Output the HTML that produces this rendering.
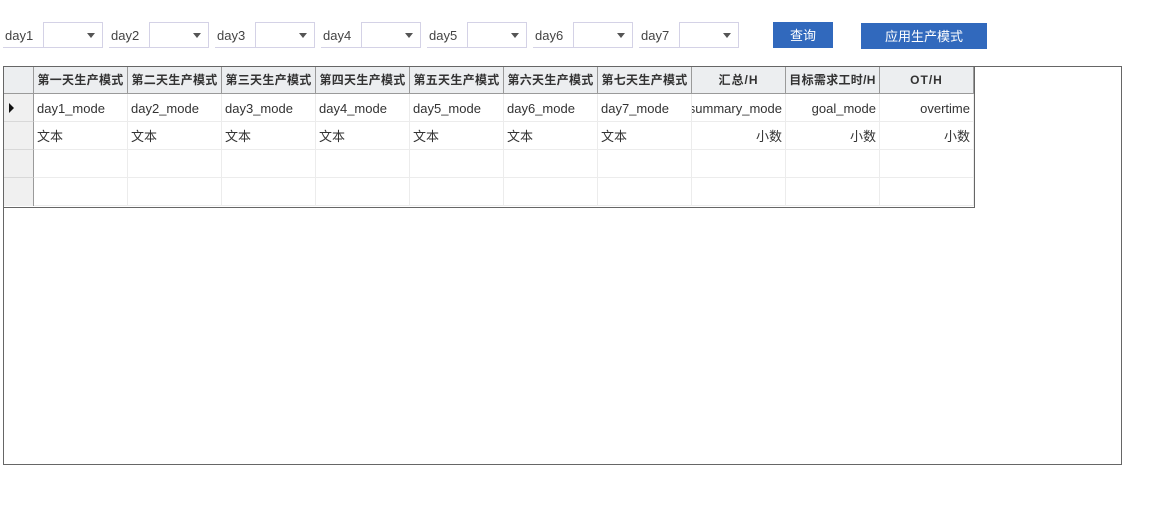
<!DOCTYPE html>
<html><head><meta charset="utf-8"><style>
*{margin:0;padding:0;box-sizing:border-box}
body{width:1171px;height:511px;background:#fff;position:relative;overflow:hidden;font-family:"Liberation Sans","Noto Sans CJK SC",sans-serif;font-size:13px;color:#333}
.a{position:absolute}
.lbl{height:26px;line-height:28px;border-bottom:1px solid #d4d2e6;padding-left:2px;color:#444}
.cb{width:60px;height:26px;border:1px solid #d4d2e6;background:#fff}
.cb:after{content:"";position:absolute;right:7px;top:10px;border-left:4px solid transparent;border-right:4px solid transparent;border-top:5px solid #555}
.btn{background:#3169bd;color:#fff;text-align:center;line-height:28px;height:26px}
.h{top:67px;height:27px;background:#eceef0;border-right:1px solid #9a9a9a;border-bottom:1px solid #9a9a9a;font-weight:bold;font-size:12px;line-height:27px;text-align:center;color:#333;overflow:hidden;white-space:nowrap;letter-spacing:0.3px}
.c{height:28px;border-right:1px solid #ececec;border-bottom:1px solid #ececec;line-height:29px;padding:0 3px;overflow:hidden;white-space:nowrap;width:94px}
.r{text-align:right}
.rh{left:4px;width:30px;height:28px;background:#f0f0f0;border-right:1px solid #9a9a9a;border-bottom:1px solid #d8d8d8}
</style></head><body>
<div class="a" style="left:3px;top:66px;width:1119px;height:399px;border:1px solid #666"></div>
<div class="a" style="left:3px;top:66px;width:972px;height:142px;border:1px solid #666;border-top:none;border-left:none"></div>

<div class="a lbl" style="left:3px;top:22px;width:40px">day1</div><div class="a cb" style="left:43px;top:22px"></div>
<div class="a lbl" style="left:109px;top:22px;width:40px">day2</div><div class="a cb" style="left:149px;top:22px"></div>
<div class="a lbl" style="left:215px;top:22px;width:40px">day3</div><div class="a cb" style="left:255px;top:22px"></div>
<div class="a lbl" style="left:321px;top:22px;width:40px">day4</div><div class="a cb" style="left:361px;top:22px"></div>
<div class="a lbl" style="left:427px;top:22px;width:40px">day5</div><div class="a cb" style="left:467px;top:22px"></div>
<div class="a lbl" style="left:533px;top:22px;width:40px">day6</div><div class="a cb" style="left:573px;top:22px"></div>
<div class="a lbl" style="left:639px;top:22px;width:40px">day7</div><div class="a cb" style="left:679px;top:22px"></div>
<div class="a btn" style="left:773px;top:22px;width:60px">查询</div>
<div class="a btn" style="left:861px;top:23px;width:126px">应用生产模式</div>

<div class="a h" style="left:4px;width:30px"></div>
<div class="a h" style="left:34px;width:94px">第一天生产模式</div>
<div class="a h" style="left:128px;width:94px">第二天生产模式</div>
<div class="a h" style="left:222px;width:94px">第三天生产模式</div>
<div class="a h" style="left:316px;width:94px">第四天生产模式</div>
<div class="a h" style="left:410px;width:94px">第五天生产模式</div>
<div class="a h" style="left:504px;width:94px">第六天生产模式</div>
<div class="a h" style="left:598px;width:94px">第七天生产模式</div>
<div class="a h" style="left:692px;width:94px;letter-spacing:1px">汇总/H</div>
<div class="a h" style="left:786px;width:94px">目标需求工时/H</div>
<div class="a h" style="left:880px;width:94px;letter-spacing:1px">OT/H</div>

<div class="a rh" style="top:94px"><div class="a" style="left:5px;top:9px;border-top:5px solid transparent;border-bottom:5px solid transparent;border-left:5px solid #111"></div></div>
<div class="a rh" style="top:122px"></div>
<div class="a rh" style="top:150px"></div>
<div class="a rh" style="top:178px;border-bottom:none"></div>

<div class="a c" style="left:34px;top:94px">day1_mode</div>
<div class="a c" style="left:128px;top:94px">day2_mode</div>
<div class="a c" style="left:222px;top:94px">day3_mode</div>
<div class="a c" style="left:316px;top:94px">day4_mode</div>
<div class="a c" style="left:410px;top:94px">day5_mode</div>
<div class="a c" style="left:504px;top:94px">day6_mode</div>
<div class="a c" style="left:598px;top:94px">day7_mode</div>
<div class="a c r" style="left:692px;top:94px;direction:rtl">summary_mode</div>
<div class="a c r" style="left:786px;top:94px">goal_mode</div>
<div class="a c r" style="left:880px;top:94px">overtime</div>

<div class="a c" style="left:34px;top:122px">文本</div>
<div class="a c" style="left:128px;top:122px">文本</div>
<div class="a c" style="left:222px;top:122px">文本</div>
<div class="a c" style="left:316px;top:122px">文本</div>
<div class="a c" style="left:410px;top:122px">文本</div>
<div class="a c" style="left:504px;top:122px">文本</div>
<div class="a c" style="left:598px;top:122px">文本</div>
<div class="a c r" style="left:692px;top:122px">小数</div>
<div class="a c r" style="left:786px;top:122px">小数</div>
<div class="a c r" style="left:880px;top:122px">小数</div>

<div class="a c" style="left:34px;top:150px"></div><div class="a c" style="left:128px;top:150px"></div><div class="a c" style="left:222px;top:150px"></div><div class="a c" style="left:316px;top:150px"></div><div class="a c" style="left:410px;top:150px"></div><div class="a c" style="left:504px;top:150px"></div><div class="a c" style="left:598px;top:150px"></div><div class="a c" style="left:692px;top:150px"></div><div class="a c" style="left:786px;top:150px"></div><div class="a c" style="left:880px;top:150px"></div>
<div class="a c" style="left:34px;top:178px"></div><div class="a c" style="left:128px;top:178px"></div><div class="a c" style="left:222px;top:178px"></div><div class="a c" style="left:316px;top:178px"></div><div class="a c" style="left:410px;top:178px"></div><div class="a c" style="left:504px;top:178px"></div><div class="a c" style="left:598px;top:178px"></div><div class="a c" style="left:692px;top:178px"></div><div class="a c" style="left:786px;top:178px"></div><div class="a c" style="left:880px;top:178px"></div>
<div class="a" style="left:3px;top:207px;width:972px;height:1px;background:#666"></div>
</body></html>
